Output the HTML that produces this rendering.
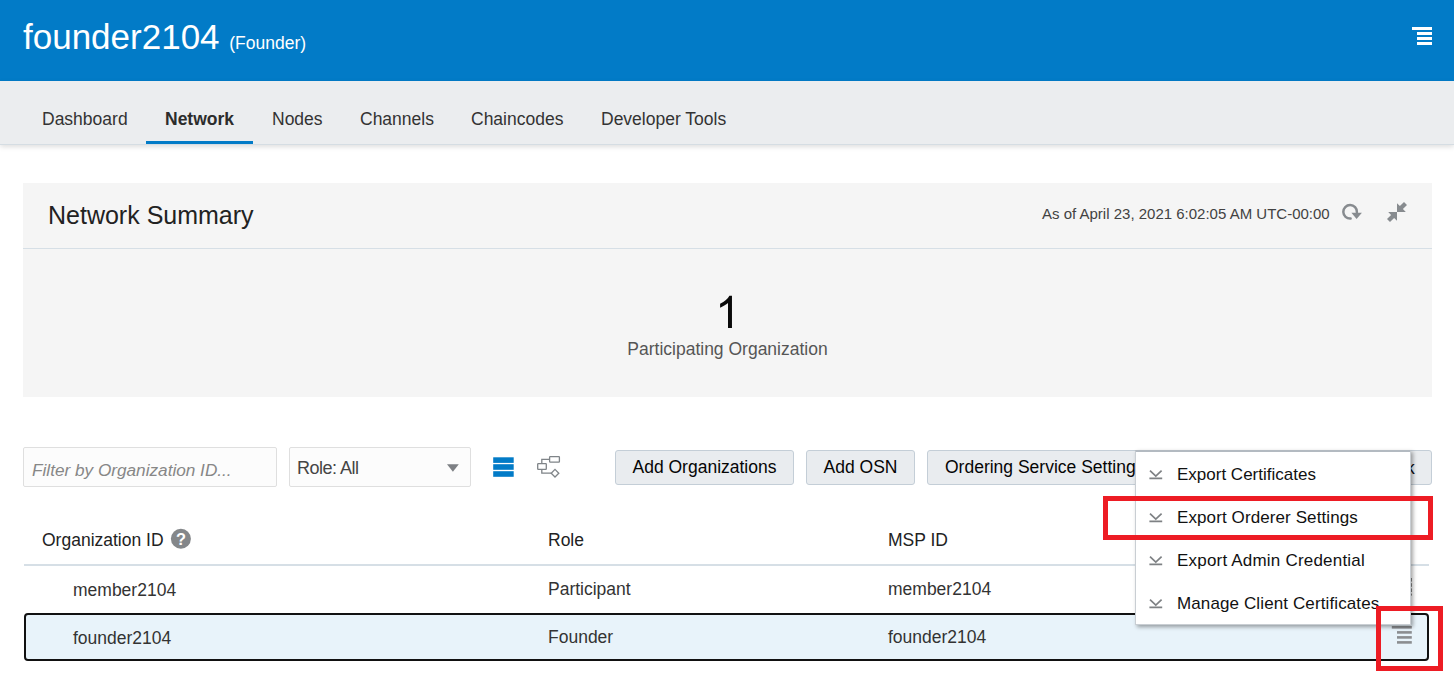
<!DOCTYPE html>
<html><head><meta charset="utf-8">
<style>
*{box-sizing:border-box;margin:0;padding:0}
html,body{width:1454px;height:690px;overflow:hidden;background:#fff}
body{font-family:"Liberation Sans",sans-serif;color:#1a1a1a;position:relative;font-size:17.5px}
.abs{position:absolute}
#hdr{left:0;top:0;width:1454px;height:81px;background:#027bc7}
#title{left:23px;top:15px;color:#fff;font-size:35px;line-height:44px;white-space:nowrap}
#title span{font-size:17.5px;margin-left:0px}
#nav{left:0;top:81px;width:1454px;height:63.5px;background:#ebedef;border-bottom:1px solid #d5dde3;box-shadow:0 2px 5px rgba(0,0,0,.13)}
.tab{position:absolute;top:108px;font-size:17.5px;line-height:22px;color:#333;white-space:nowrap}
#panel{left:23px;top:183px;width:1409px;height:214px;background:#f5f5f5}
#pline{left:23px;top:248px;width:1409px;height:1px;background:#d6dfe6}
.btn{position:absolute;top:450px;height:35px;background:#e9ecef;border:1px solid #c4ced7;border-radius:3px;font-size:17.5px;line-height:33px;text-align:center;color:#050505;white-space:nowrap}
.inp{position:absolute;top:447px;height:40px;background:#fcfcfc;border:1px solid #dfdfdf;border-radius:2px}
.cell{position:absolute;font-size:17.5px;line-height:22px;color:#333;white-space:nowrap}
.mi{position:absolute;left:1177px;font-size:17px;line-height:22px;color:#111;white-space:nowrap}
</style></head><body>
<div id="hdr" class="abs"></div>
<div id="title" class="abs">founder2104 <span>(Founder)</span></div>
<svg class="abs" style="left:1410px;top:25px" width="24" height="22"><g fill="#fff"><rect x="2" y="2" width="20" height="3"/><rect x="7" y="7" width="15" height="3"/><rect x="7" y="12" width="15" height="3"/><rect x="7" y="17" width="15" height="3"/></g></svg>

<div id="nav" class="abs"></div>
<div class="tab" style="left:42px">Dashboard</div>
<div class="tab" style="left:165px;font-weight:bold;color:#2c2c2c">Network</div>
<div class="tab" style="left:272px">Nodes</div>
<div class="tab" style="left:360px">Channels</div>
<div class="tab" style="left:471px">Chaincodes</div>
<div class="tab" style="left:601px">Developer Tools</div>
<div class="abs" style="left:146px;top:141px;width:107px;height:3px;background:#027bc7"></div>

<div id="panel" class="abs"></div>
<div id="pline" class="abs"></div>
<div class="abs" style="left:48px;top:200px;font-size:25px;line-height:30px;color:#222;white-space:nowrap">Network Summary</div>
<div class="abs" id="asof" style="left:1042px;top:205px;font-size:15px;line-height:18px;color:#424242;white-space:nowrap">As of April 23, 2021 6:02:05 AM UTC-00:00</div>
<svg class="abs" style="left:1338px;top:198px" width="28" height="28" viewBox="0 0 28 28"><path d="M18.9 14.2 A6.8 6.8 0 1 0 12.6 20.6" fill="none" stroke="#878b8f" stroke-width="2.5" stroke-linecap="round"/><path d="M13.4 14.7 L23.9 14.7 L18.6 20.9 Z" fill="#878b8f"/></svg>
<svg class="abs" style="left:1384px;top:199px" width="26" height="26" viewBox="0 0 26 26"><g fill="#878b8f"><path d="M13 13 L13 4.2 L15.9 7.1 L20 3 L23 6 L18.9 10.1 L21.8 13 Z"/><path d="M13 13 L13 21.8 L10.1 18.9 L6 23 L3 20 L7.1 15.9 L4.2 13 Z"/></g></svg>

<svg class="abs" style="left:700px;top:285px" width="60" height="50"><path transform="translate(15.2,43.1) scale(0.02197,-0.02197)" d="M763 0 H583 V1147 Q518 1085 412.5 1023 Q307 961 223 930 V1104 Q374 1175 487 1276 Q600 1377 647 1472 H763 Z" fill="#0a0a0a"/></svg>
<div class="abs" style="left:577px;top:338px;width:301px;text-align:center;font-size:17.5px;line-height:22px;color:#555;white-space:nowrap">Participating Organization</div>

<div class="inp" style="left:23px;width:254px"></div>
<div class="abs" id="ph" style="left:32px;top:458.8px;font-size:17.2px;line-height:22px;font-style:italic;color:#878787;white-space:nowrap">Filter by Organization ID...</div>
<div class="inp" style="left:289px;width:182px"></div>
<div class="abs" id="role" style="left:297px;top:457px;font-size:18px;letter-spacing:-0.5px;line-height:22px;color:#454545;white-space:nowrap">Role: All</div>
<svg class="abs" style="left:445px;top:462px" width="16" height="12"><path d="M2 2.3 L13.8 2.3 L7.9 9.8 Z" fill="#7d8084"/></svg>
<svg class="abs" style="left:490px;top:454px" width="28" height="26"><g fill="#027bc7"><rect x="3.2" y="3.3" width="20.5" height="5.6"/><rect x="3.2" y="10.2" width="20.5" height="5.6"/><rect x="3.2" y="17.2" width="20.5" height="5.6"/></g></svg>
<svg class="abs" style="left:534px;top:452px" width="30" height="28" viewBox="0 0 30 28"><g fill="none" stroke="#7f8488" stroke-width="1.3"><rect x="15.6" y="4.6" width="9.8" height="5.6" rx="0.6" fill="#fff"/><rect x="3.7" y="11.7" width="8.6" height="5.6" rx="0.6" fill="#fff"/><path d="M7.8 11.7 V7.4 H15.6"/><path d="M7.8 17.3 V21.2 H17"/><path d="M21 17.4 L24.8 21.2 L21 25 L17.2 21.2 Z" fill="#fff"/></g></svg>

<div class="btn" style="left:615px;width:179px">Add Organizations</div>
<div class="btn" style="left:806px;width:109px">Add OSN</div>
<div class="btn" style="left:927px;width:505px;text-align:left;padding-left:17px">Ordering Service Settings</div>
<div class="abs" style="left:1406px;top:457px;font-size:17.5px;line-height:22px;color:#111">k</div>

<div class="cell" style="left:42px;top:529px;color:#222">Organization ID</div>
<svg class="abs" style="left:170px;top:528px" width="22" height="22" viewBox="0 0 22 22"><circle cx="10.9" cy="10.7" r="10" fill="#84878a"/><text x="10.9" y="17.1" text-anchor="middle" font-family="Liberation Sans" font-weight="bold" font-size="16.4" fill="#fff">?</text></svg>
<div class="cell" style="left:548px;top:529px;color:#222">Role</div>
<div class="cell" style="left:888px;top:529px;color:#222">MSP ID</div>
<div class="abs" style="left:24px;top:564px;width:1405px;height:2px;background:#d6dfe6"></div>

<div class="cell" style="left:73px;top:579px">member2104</div>
<div class="cell" style="left:548px;top:578px">Participant</div>
<div class="cell" style="left:888px;top:578px">member2104</div>
<svg class="abs" style="left:1408px;top:576px" width="8" height="24"><path d="M3.4 2 V19.6" stroke="#6a6a6a" stroke-width="0.9" stroke-dasharray="3.6 1.6" fill="none"/></svg>

<div class="abs" style="left:24px;top:613px;width:1405px;height:48px;background:#e8f3fa;border:2px solid #111;border-radius:4px"></div>
<div class="cell" style="left:73px;top:627px">founder2104</div>
<div class="cell" style="left:548px;top:626px">Founder</div>
<div class="cell" style="left:888px;top:626px">founder2104</div>
<svg class="abs" style="left:1390px;top:624px" width="24" height="22"><g fill="#8b8d90"><rect x="1.8" y="2" width="20" height="2.6"/><rect x="7" y="7.1" width="14.8" height="2.6"/><rect x="7" y="12.1" width="14.8" height="2.6"/><rect x="7" y="17.1" width="14.8" height="2.6"/></g></svg>

<div class="abs" id="menu" style="left:1135px;top:450px;width:276px;height:174.5px;background:#fff;border:1px solid #c9ced3;border-top:2px solid #b3bac1;box-shadow:2px 2px 4px rgba(0,0,0,.36)"></div>
<div class="mi" style="top:464px">Export Certificates</div>
<div class="mi" style="top:507px;letter-spacing:0.1px">Export Orderer Settings</div>
<div class="mi" style="top:550px;letter-spacing:0.2px">Export Admin Credential</div>
<div class="mi" style="top:593px;letter-spacing:0.115px">Manage Client Certificates</div>
<svg class="abs" style="left:1146px;top:460px" width="20" height="160"><g fill="none" stroke="#7e8184" stroke-width="1.7"><path d="M4 10.6 L9.8 16 L15.6 10.6 M3.4 18.3 H16.2"/><path d="M4 53.6 L9.8 59 L15.6 53.6 M3.4 61.3 H16.2"/><path d="M4 96.6 L9.8 102 L15.6 96.6 M3.4 104.3 H16.2"/><path d="M4 139.6 L9.8 145 L15.6 139.6 M3.4 147.3 H16.2"/></g></svg>

<div class="abs" style="left:1103px;top:496px;width:330px;height:44px;border:5px solid #ed1c24"></div>
<div class="abs" style="left:1376px;top:606px;width:67px;height:65px;border:5px solid #ed1c24"></div>
</body></html>
